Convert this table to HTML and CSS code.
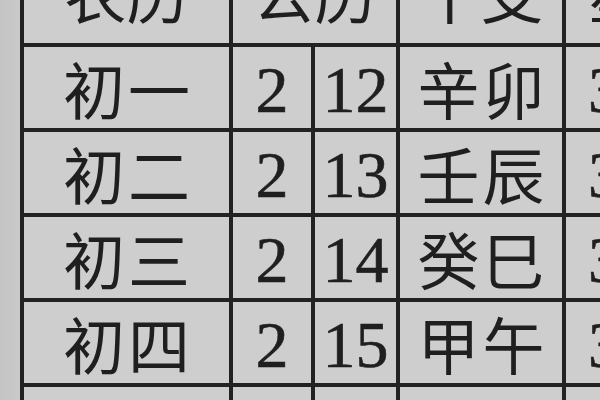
FILE: index.html
```html
<!DOCTYPE html>
<html lang="zh">
<head>
<meta charset="utf-8">
<title>农历表</title>
<link rel="stylesheet" href="styles.css">
</head>
<body>
<div class="page">
  <div class="sheet">
    <div class="cell head">农历</div>
    <div class="cell head span2">公历</div>
    <div class="cell head">干支</div>
    <div class="cell head edge">星期</div>

    <div class="cell cn">初一</div>
    <div class="cell num">2</div>
    <div class="cell num">12</div>
    <div class="cell cn">辛卯</div>
    <div class="cell num edge">3</div>

    <div class="cell cn">初二</div>
    <div class="cell num">2</div>
    <div class="cell num">13</div>
    <div class="cell cn">壬辰</div>
    <div class="cell num edge">3</div>

    <div class="cell cn">初三</div>
    <div class="cell num">2</div>
    <div class="cell num">14</div>
    <div class="cell cn">癸巳</div>
    <div class="cell num edge">3</div>

    <div class="cell cn">初四</div>
    <div class="cell num">2</div>
    <div class="cell num">15</div>
    <div class="cell cn">甲午</div>
    <div class="cell num edge">3</div>

    <div class="cell cn">初五</div>
    <div class="cell num">2</div>
    <div class="cell num">16</div>
    <div class="cell cn">乙未</div>
    <div class="cell num edge">3</div>
  </div>
</div>
</body>
</html>
```
FILE: styles.css
```css
html, body {
  margin: 0;
  padding: 0;
}
body {
  width: 600px;
  height: 400px;
  overflow: hidden;
  background: #c6c6c6;
}
.page {
  width: 600px;
  height: 400px;
  overflow: hidden;
  padding-left: 20px;
  box-sizing: border-box;
  background: linear-gradient(90deg, #c4c4c4 0, #c9c9c9 20px);
}
.sheet {
  margin-top: -49px;
  width: 700px;
  display: grid;
  grid-template-columns: 205px 78px 81px 162px 120px;
  grid-template-rows: 92px 81px 81px 81px 81px 81px;
  gap: 4px;
  border-left: 4px solid #222;
  background: #222;
}
.cell {
  background: #cecece;
  display: flex;
  align-items: center;
  justify-content: center;
  color: #1f1f1f;
  overflow: hidden;
  white-space: nowrap;
}
.head, .cn {
  font-family: "Noto Sans CJK SC", "Noto Sans CJK JP", sans-serif;
  font-weight: 400;
  font-size: 62px;
  line-height: 1;
}
.cn {
  letter-spacing: 3px;
  padding-left: 3px;
  box-sizing: border-box;
}
.head {
  padding-bottom: 10px;
  box-sizing: border-box;
}
.num {
  font-family: "Liberation Serif", serif;
  font-size: 66px;
  line-height: 1;
  padding-top: 4px;
  box-sizing: border-box;
  -webkit-text-stroke: 0.6px #1f1f1f;
}
.span2 {
  grid-column: span 2;
}
.edge {
  justify-content: flex-start;
  padding-left: 22px;
}
```
